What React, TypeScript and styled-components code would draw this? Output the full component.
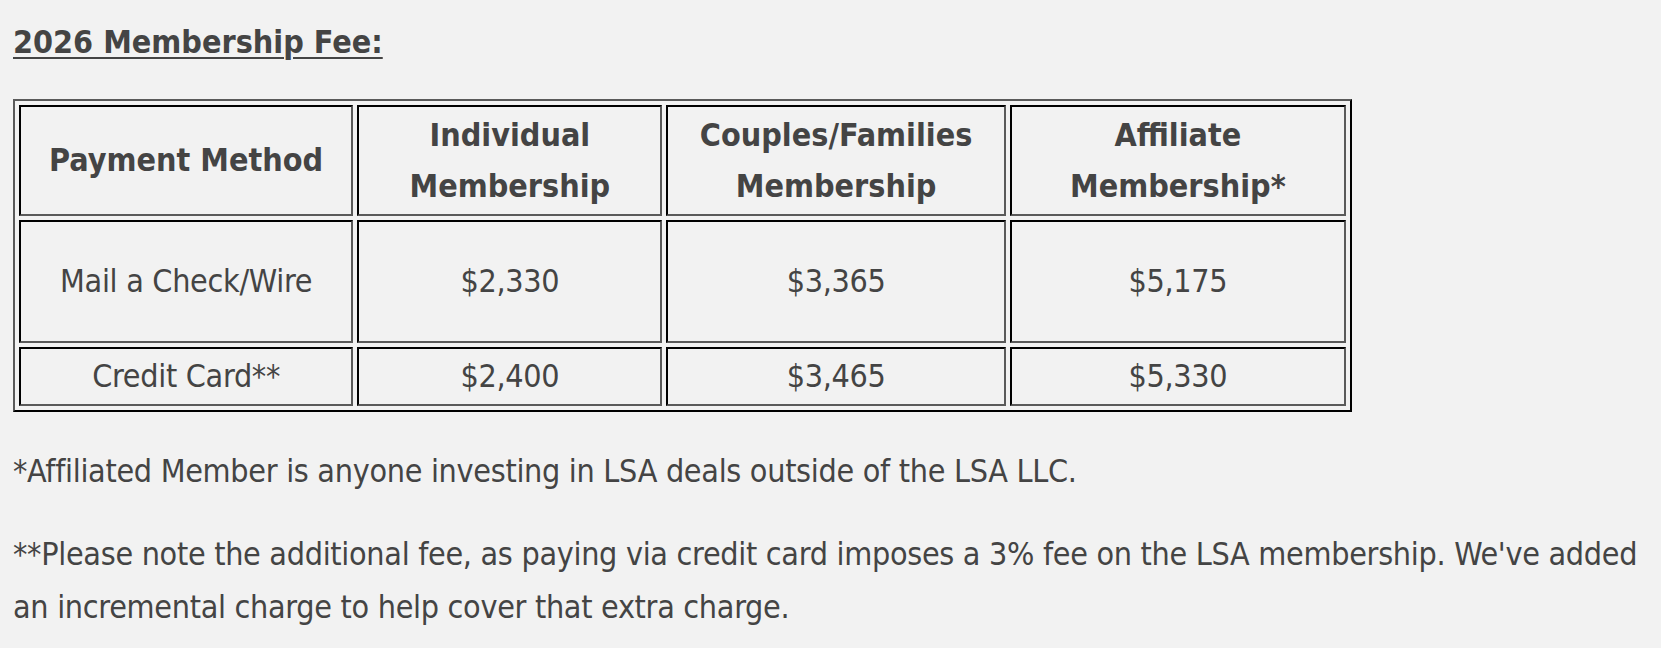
import React from "react";
import styled, { createGlobalStyle } from "styled-components";

const Global = createGlobalStyle`
  html, body { margin: 0; padding: 0; background: #f2f2f2; }
  body { font-family: "DejaVu Sans Condensed", "DejaVu Sans", sans-serif; color: #444; }
`;

const Page = styled.div`
  padding: 17px 13px 0 13px;
  font-size: 32px;
  line-height: 1.66;
  letter-spacing: -0.3px;
`;

const Title = styled.h2`
  margin: 0 0 31px 0;
  font-size: 32px;
  font-weight: bold;
  line-height: 1.6;
  letter-spacing: 0;
  text-decoration: underline;
  text-decoration-thickness: 2px;
  text-underline-offset: 4px;
`;

const Table = styled.table`
  border: 2px solid;
  border-color: #5a5a5a #000 #000 #5a5a5a;
  border-spacing: 4px;
  width: 1339px;
  line-height: 1.6;
`;

const Row = styled.tr<{ $h: number }>`
  height: ${(p) => p.$h}px;
`;

const Cell = styled.td<{ $w?: number; $head?: boolean }>`
  border: 2px solid;
  border-color: #000 #5a5a5a #5a5a5a #000;
  text-align: center;
  vertical-align: middle;
  padding: 0 8px;
  font-weight: ${(p) => (p.$head ? "bold" : "normal")};
  letter-spacing: ${(p) => (p.$head ? "0" : "-0.3px")};
  ${(p) => (p.$w ? `width: ${p.$w}px;` : "")}
  box-sizing: border-box;
`;

const Note = styled.p<{ $gap: number }>`
  margin: ${(p) => p.$gap}px 0 0 0;
`;

const heads = ["Payment Method", "Individual\nMembership", "Couples/Families\nMembership", "Affiliate\nMembership*"];
const widths = [334, 305, 339, 336];
const rows = [
  { h: 123, cells: ["Mail a Check/Wire", "$2,330", "$3,365", "$5,175"] },
  { h: 59, cells: ["Credit Card**", "$2,400", "$3,465", "$5,330"] },
];

export default function App() {
  return (
    <>
      <Global />
      <Page>
        <Title>2026 Membership Fee:</Title>
        <Table>
          <tbody>
            <Row $h={111}>
              {heads.map((h, i) => (
                <Cell key={i} $head $w={widths[i]}>
                  {h.split("\n").map((l, j) => (
                    <React.Fragment key={j}>
                      {j > 0 && <br />}
                      {l}
                    </React.Fragment>
                  ))}
                </Cell>
              ))}
            </Row>
            {rows.map((r, i) => (
              <Row key={i} $h={r.h}>
                {r.cells.map((c, j) => (
                  <Cell key={j}>{c}</Cell>
                ))}
              </Row>
            ))}
          </tbody>
        </Table>
        <Note $gap={33}>*Affiliated Member is anyone investing in LSA deals outside of the LSA LLC.</Note>
        <Note $gap={30}>
          **Please note the additional fee, as paying via credit card imposes a 3% fee on the LSA membership. We've added an
          incremental charge to help cover that extra charge.
        </Note>
      </Page>
    </>
  );
}
